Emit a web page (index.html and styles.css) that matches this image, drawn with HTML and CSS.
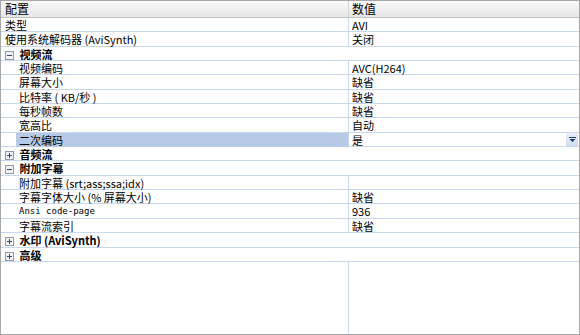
FILE: index.html
```html
<!DOCTYPE html>
<html lang="zh-CN">
<head>
    <meta charset="UTF-8">
    <title>配置</title>
    <link rel="stylesheet" href="styles.css">
</head>
<body>
    <div class="grid">
        <div class="head">
            <div class="name">配置</div>
            <div class="value">数值</div>
        </div>

        <div class="row"><div class="name">类型</div><div class="value">AVI</div></div>
        <div class="row"><div class="name">使用系统解码器 (AviSynth)</div><div class="value">关闭</div></div>

        <div class="row group">
            <svg class="toggle" width="9" height="9" viewBox="0 0 9 9"><rect x="0.5" y="0.5" width="8" height="8" fill="#f1f3f6" stroke="#8f9aab"/><path d="M2 4.5h5" stroke="#2f4a80"/></svg>
            <span>视频流</span>
        </div>
        <div class="row child"><div class="name">视频编码</div><div class="value">AVC(H264)</div></div>
        <div class="row child"><div class="name">屏幕大小</div><div class="value">缺省</div></div>
        <div class="row child"><div class="name">比特率 ( KB/秒 )</div><div class="value">缺省</div></div>
        <div class="row child"><div class="name">每秒帧数</div><div class="value">缺省</div></div>
        <div class="row child"><div class="name">宽高比</div><div class="value">自动</div></div>
        <div class="row child selected">
            <div class="name">二次编码</div>
            <div class="value">
                <span>是</span>
                <span class="drop"><svg width="7" height="5" viewBox="0 0 7 5"><path d="M0 0.5h7" stroke="#1d3c70"/><path d="M0.5 2h6l-3 3z" fill="#1d3c70"/></svg></span>
            </div>
        </div>

        <div class="row group">
            <svg class="toggle" width="9" height="9" viewBox="0 0 9 9"><rect x="0.5" y="0.5" width="8" height="8" fill="#f1f3f6" stroke="#8f9aab"/><path d="M2 4.5h5M4.5 2v5" stroke="#2f4a80"/></svg>
            <span>音频流</span>
        </div>

        <div class="row group">
            <svg class="toggle" width="9" height="9" viewBox="0 0 9 9"><rect x="0.5" y="0.5" width="8" height="8" fill="#f1f3f6" stroke="#8f9aab"/><path d="M2 4.5h5" stroke="#2f4a80"/></svg>
            <span>附加字幕</span>
        </div>
        <div class="row child"><div class="name">附加字幕 (srt;ass;ssa;idx)</div><div class="value"></div></div>
        <div class="row child"><div class="name">字幕字体大小 (% 屏幕大小)</div><div class="value">缺省</div></div>
        <div class="row child"><div class="name mono">Ansi code-page</div><div class="value">936</div></div>
        <div class="row child"><div class="name">字幕流索引</div><div class="value">缺省</div></div>

        <div class="row group">
            <svg class="toggle" width="9" height="9" viewBox="0 0 9 9"><rect x="0.5" y="0.5" width="8" height="8" fill="#f1f3f6" stroke="#8f9aab"/><path d="M2 4.5h5M4.5 2v5" stroke="#2f4a80"/></svg>
            <span>水印 (AviSynth)</span>
        </div>
        <div class="row group">
            <svg class="toggle" width="9" height="9" viewBox="0 0 9 9"><rect x="0.5" y="0.5" width="8" height="8" fill="#f1f3f6" stroke="#8f9aab"/><path d="M2 4.5h5M4.5 2v5" stroke="#2f4a80"/></svg>
            <span>高级</span>
        </div>

        <div class="filler">
            <div class="name"></div>
            <div class="value"></div>
        </div>
    </div>
</body>
</html>
```

FILE: styles.css
```css
* {
    box-sizing: border-box;
}
body {
    margin: 0;
    font-family: "Noto Sans CJK SC", "DejaVu Sans", sans-serif;
    font-size: 11px;
    color: #000;
    background: #fff;
}
.grid {
    width: 580px;
    height: 335px;
    border: 1px solid #a7a7a7;
    display: flex;
    flex-direction: column;
}
.head {
    display: grid;
    grid-template-columns: 347px 1fr;
    height: 17px;
    border-bottom: 1px solid #c3c3c3;
    background: linear-gradient(#fbfbfb, #e6e6e6);
    font-size: 12px;
    line-height: 16px;
}
.head .name {
    padding-left: 4px;
}
.head .value {
    border-left: 1px solid #d2d2d2;
    padding-left: 3px;
}
.row {
    display: grid;
    grid-template-columns: 347px 1fr;
    height: 14.35px;
    border-bottom: 1px solid #c8d8ee;
    line-height: 14px;
    white-space: nowrap;
}
.row .name {
    padding-left: 4px;
}
.row .value {
    border-left: 1px solid #c8d8ee;
    padding-left: 3px;
    display: flex;
    justify-content: space-between;
}
.row.child .name {
    margin-left: 15px;
    padding-left: 3px;
}
.row.selected .name {
    background: #b6cae8;
}
.mono {
    font-family: "DejaVu Sans Mono", monospace;
    font-size: 9px;
}
.drop {
    width: 12px;
    height: 13px;
    margin-right: 1px;
    background: linear-gradient(#e8eff9, #d0ddf0);
    display: flex;
    align-items: center;
    justify-content: center;
}
.row.group {
    display: block;
    padding-left: 4px;
    font-weight: bold;
}
.toggle {
    vertical-align: -1px;
    margin-right: 3px;
}
.filler {
    flex: 1;
    display: grid;
    grid-template-columns: 347px 1fr;
}
.filler .value {
    border-left: 1px solid #c8d8ee;
}
```
